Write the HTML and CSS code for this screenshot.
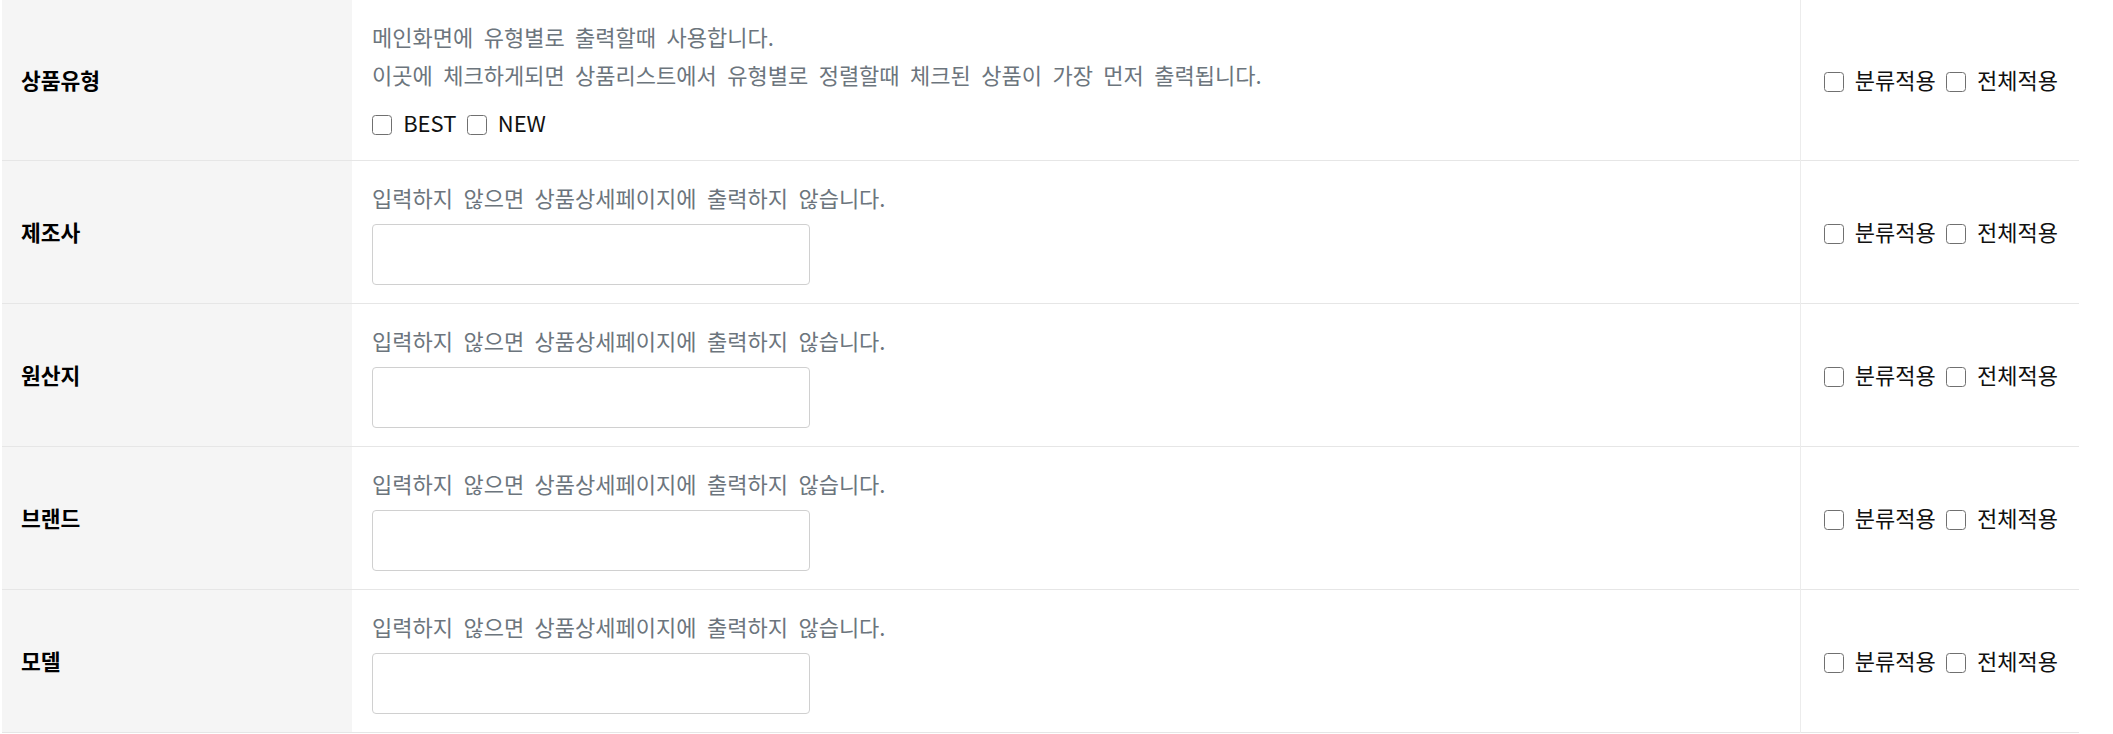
FILE: index.html
```html
<!DOCTYPE html>
<html lang="ko">
<head>
<meta charset="utf-8">
<title>상품 정보</title>
<link rel="stylesheet" href="styles.css">
</head>
<body>
<div class="wrap">
<table class="form-table">
  <colgroup>
    <col class="col-label">
    <col class="col-main">
    <col class="col-apply">
  </colgroup>
  <tbody>
    <tr>
      <th class="label">상품유형</th>
      <td class="main">
        <div class="help">메인화면에 유형별로 출력할때 사용합니다.</div>
        <div class="help">이곳에 체크하게되면 상품리스트에서 유형별로 정렬할때 체크된 상품이 가장 먼저 출력됩니다.</div>
        <div class="checks"><label class="chk"><input type="checkbox" class="box"> BEST</label> <label class="chk"><input type="checkbox" class="box"> NEW</label></div>
      </td>
      <td class="apply"><label class="chk"><input type="checkbox" class="box"> 분류적용</label> <label class="chk"><input type="checkbox" class="box"> 전체적용</label></td>
    </tr>
    <tr>
      <th class="label">제조사</th>
      <td class="main">
        <div class="help">입력하지 않으면 상품상세페이지에 출력하지 않습니다.</div>
        <input type="text" class="field">
      </td>
      <td class="apply"><label class="chk"><input type="checkbox" class="box"> 분류적용</label> <label class="chk"><input type="checkbox" class="box"> 전체적용</label></td>
    </tr>
    <tr>
      <th class="label">원산지</th>
      <td class="main">
        <div class="help">입력하지 않으면 상품상세페이지에 출력하지 않습니다.</div>
        <input type="text" class="field">
      </td>
      <td class="apply"><label class="chk"><input type="checkbox" class="box"> 분류적용</label> <label class="chk"><input type="checkbox" class="box"> 전체적용</label></td>
    </tr>
    <tr>
      <th class="label">브랜드</th>
      <td class="main">
        <div class="help">입력하지 않으면 상품상세페이지에 출력하지 않습니다.</div>
        <input type="text" class="field">
      </td>
      <td class="apply"><label class="chk"><input type="checkbox" class="box"> 분류적용</label> <label class="chk"><input type="checkbox" class="box"> 전체적용</label></td>
    </tr>
    <tr>
      <th class="label">모델</th>
      <td class="main">
        <div class="help">입력하지 않으면 상품상세페이지에 출력하지 않습니다.</div>
        <input type="text" class="field">
      </td>
      <td class="apply"><label class="chk"><input type="checkbox" class="box"> 분류적용</label> <label class="chk"><input type="checkbox" class="box"> 전체적용</label></td>
    </tr>
  </tbody>
</table>
</div>
</body>
</html>
```
FILE: styles.css
```css
html, body {
  margin: 0;
  padding: 0;
  background: #fff;
}
body {
  font-family: "Noto Sans CJK KR", "Noto Sans", sans-serif;
  font-size: 22px;
  color: #111;
}
.wrap {
  padding-left: 2px;
}
.form-table {
  border-collapse: collapse;
  table-layout: fixed;
  width: 2077px;
}
.col-label { width: 350px; }
.col-main { width: 1448px; }
.col-apply { width: 279px; }

.form-table tr {
  border-bottom: 1px solid #e6e6e6;
}
.label {
  background: #f5f5f5;
  text-align: left;
  font-weight: 700;
  color: #000;
  padding: 0 0 2px 19px;
  vertical-align: middle;
  font-size: 21.5px;
}
.main {
  padding: 17px 20px 18px 20px;
  vertical-align: top;
  border-right: 1px solid #ececec;
}
.help {
  color: #6c757d;
  line-height: 38px;
  word-spacing: 4.3px;
}
.checks {
  margin: 12px 0 2px;
  line-height: 35px;
}
.chk {
  color: #111;
  white-space: nowrap;
}
.chk + .chk {
  margin-left: 4px;
}
.box {
  -webkit-appearance: none;
  appearance: none;
  width: 20px;
  height: 20px;
  margin: 0 5px 0 0;
  border: 1.6px solid #707070;
  border-radius: 3.5px;
  background: #fff;
  vertical-align: -3px;
  box-sizing: border-box;
}
.apply {
  padding: 0 0 2px 23px;
  vertical-align: middle;
  white-space: nowrap;
  line-height: 35px;
}
.field {
  display: block;
  margin-top: 8px;
  width: 438px;
  height: 61px;
  box-sizing: border-box;
  border: 1px solid #d0d0d0;
  border-radius: 4px;
  background: #fff;
  font: inherit;
}
```
